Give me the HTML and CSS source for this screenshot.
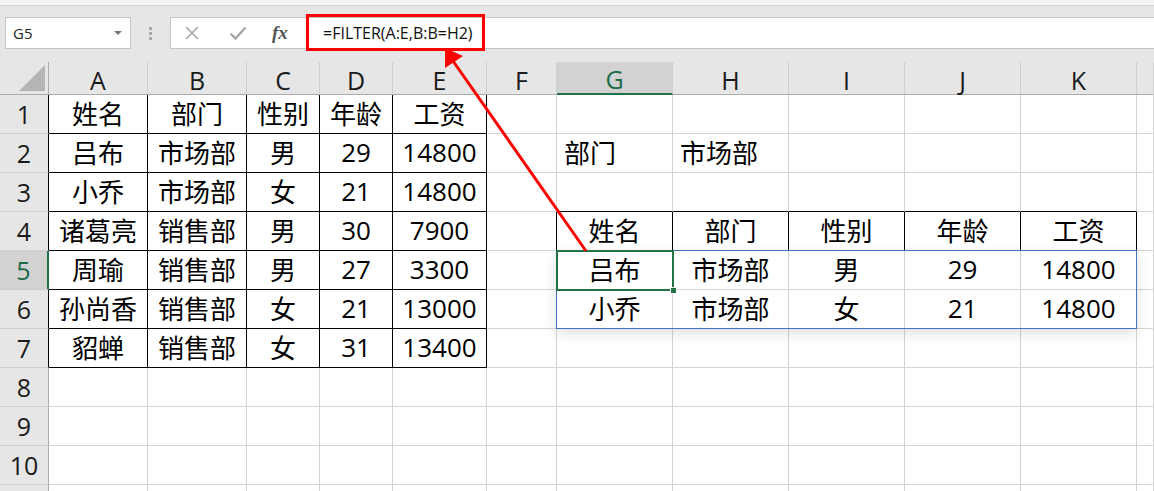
FILE: index.html
```html
<!DOCTYPE html>
<html lang="zh-CN">
<head>
    <meta charset="UTF-8">
    <title>FILTER</title>
    <link rel="stylesheet" href="styles.css">
</head>
<body>
<div class="app">
    <div class="ribbon-edge"></div>

    <!-- name box + formula bar -->
    <div class="formula-row">
        <div class="namebox">
            <span>G5</span>
            <span class="caret"></span>
        </div>
        <div class="grip"><i></i><i></i><i></i></div>
        <div class="fbox">
            <div class="fbtns">
                <svg width="16" height="16" viewBox="0 0 16 16"><path d="M2 2 L14 14 M14 2 L2 14" stroke="#a6a6a6" stroke-width="1.6" fill="none"/></svg>
                <svg width="18" height="16" viewBox="0 0 18 16"><path d="M1.5 8.5 L6.5 13.5 L16.5 2.5" stroke="#a6a6a6" stroke-width="2.4" fill="none"/></svg>
                <span class="fx">fx</span>
            </div>
            <div class="ftext">=FILTER(A:E,B:B=H2)</div>
        </div>
    </div>

    <!-- worksheet -->
    <div class="sheet">
        <div class="corner"><span class="tri"></span></div>
        <div class="ch">A</div>
        <div class="ch">B</div>
        <div class="ch">C</div>
        <div class="ch">D</div>
        <div class="ch">E</div>
        <div class="ch">F</div>
        <div class="ch sel">G</div>
        <div class="ch">H</div>
        <div class="ch">I</div>
        <div class="ch">J</div>
        <div class="ch">K</div>
        <div class="ch"></div>

        <div class="rh edge">1</div>
        <div class="c t">姓名</div>
        <div class="c t">部门</div>
        <div class="c t">性别</div>
        <div class="c t">年龄</div>
        <div class="c t">工资</div>
        <div class="c"></div>
        <div class="c"></div>
        <div class="c"></div>
        <div class="c"></div>
        <div class="c"></div>
        <div class="c"></div>
        <div class="c"></div>

        <div class="rh edge">2</div>
        <div class="c t">吕布</div>
        <div class="c t">市场部</div>
        <div class="c t">男</div>
        <div class="c t">29</div>
        <div class="c t">14800</div>
        <div class="c"></div>
        <div class="c left">部门</div>
        <div class="c left">市场部</div>
        <div class="c"></div>
        <div class="c"></div>
        <div class="c"></div>
        <div class="c"></div>

        <div class="rh edge">3</div>
        <div class="c t">小乔</div>
        <div class="c t">市场部</div>
        <div class="c t">女</div>
        <div class="c t">21</div>
        <div class="c t">14800</div>
        <div class="c"></div>
        <div class="c bb"></div>
        <div class="c bb"></div>
        <div class="c bb"></div>
        <div class="c bb"></div>
        <div class="c bb"></div>
        <div class="c"></div>

        <div class="rh edge">4</div>
        <div class="c t">诸葛亮</div>
        <div class="c t">销售部</div>
        <div class="c t">男</div>
        <div class="c t">30</div>
        <div class="c t">7900</div>
        <div class="c br"></div>
        <div class="c t">姓名</div>
        <div class="c t">部门</div>
        <div class="c t">性别</div>
        <div class="c t">年龄</div>
        <div class="c t">工资</div>
        <div class="c"></div>

        <div class="rh sel">5</div>
        <div class="c t">周瑜</div>
        <div class="c t">销售部</div>
        <div class="c t">男</div>
        <div class="c t">27</div>
        <div class="c t">3300</div>
        <div class="c"></div>
        <div class="c">吕布</div>
        <div class="c">市场部</div>
        <div class="c">男</div>
        <div class="c">29</div>
        <div class="c">14800</div>
        <div class="c"></div>

        <div class="rh edge">6</div>
        <div class="c t">孙尚香</div>
        <div class="c t">销售部</div>
        <div class="c t">女</div>
        <div class="c t">21</div>
        <div class="c t">13000</div>
        <div class="c"></div>
        <div class="c">小乔</div>
        <div class="c">市场部</div>
        <div class="c">女</div>
        <div class="c">21</div>
        <div class="c">14800</div>
        <div class="c"></div>

        <div class="rh edge">7</div>
        <div class="c t">貂蝉</div>
        <div class="c t">销售部</div>
        <div class="c t">女</div>
        <div class="c t">31</div>
        <div class="c t">13400</div>
        <div class="c"></div>
        <div class="c"></div>
        <div class="c"></div>
        <div class="c"></div>
        <div class="c"></div>
        <div class="c"></div>
        <div class="c"></div>

        <div class="rh">8</div>
        <div class="c"></div>
        <div class="c"></div>
        <div class="c"></div>
        <div class="c"></div>
        <div class="c"></div>
        <div class="c"></div>
        <div class="c"></div>
        <div class="c"></div>
        <div class="c"></div>
        <div class="c"></div>
        <div class="c"></div>
        <div class="c"></div>

        <div class="rh">9</div>
        <div class="c"></div>
        <div class="c"></div>
        <div class="c"></div>
        <div class="c"></div>
        <div class="c"></div>
        <div class="c"></div>
        <div class="c"></div>
        <div class="c"></div>
        <div class="c"></div>
        <div class="c"></div>
        <div class="c"></div>
        <div class="c"></div>

        <div class="rh">10</div>
        <div class="c"></div>
        <div class="c"></div>
        <div class="c"></div>
        <div class="c"></div>
        <div class="c"></div>
        <div class="c"></div>
        <div class="c"></div>
        <div class="c"></div>
        <div class="c"></div>
        <div class="c"></div>
        <div class="c"></div>
        <div class="c"></div>

        <!-- row 11 only peeks in at the bottom edge -->
        <div class="rh"></div>
        <div class="c"></div>
        <div class="c"></div>
        <div class="c"></div>
        <div class="c"></div>
        <div class="c"></div>
        <div class="c"></div>
        <div class="c"></div>
        <div class="c"></div>
        <div class="c"></div>
        <div class="c"></div>
        <div class="c"></div>
        <div class="c"></div>

        <!-- spill range + active cell -->
        <div class="spill"></div>
        <div class="active"><span class="handle"></span></div>
    </div>

    <!-- annotation -->
    <div class="callout"></div>
    <svg class="arrow" width="1154" height="491" viewBox="0 0 1154 491">
        <line x1="586" y1="251" x2="453" y2="61" stroke="#ff0000" stroke-width="3"/>
        <polygon points="445,48 445,68 463,56" fill="#ff0000"/>
    </svg>
</div>
</body>
</html>
```

FILE: styles.css
```css
* {
    box-sizing: border-box;
}
body {
    margin: 0;
    overflow: hidden;
    background: #fff;
    font-family: "Open Sans", "Noto Sans CJK SC", sans-serif;
    color: #000;
}
.app {
    position: relative;
    width: 1154px;
    height: 491px;
    overflow: hidden;
}

/* top strip */
.ribbon-edge {
    height: 6px;
    background: #f3f3f3;
    border-bottom: 1px solid #d6d6d6;
}
.formula-row {
    height: 56px;
    background: #e6e6e6;
    display: flex;
    align-items: flex-start;
    padding: 11px 0 0 5px;
}
.namebox {
    width: 126px;
    height: 32px;
    background: #fff;
    border: 1px solid #c6c6c6;
    display: flex;
    align-items: center;
    justify-content: space-between;
    padding: 0 8px 0 7px;
    font-size: 15px;
    color: #222;
}
.caret {
    width: 0;
    height: 0;
    border-left: 4px solid transparent;
    border-right: 4px solid transparent;
    border-top: 4px solid #777;
}
.grip {
    width: 39px;
    height: 32px;
    display: flex;
    flex-direction: column;
    align-items: center;
    justify-content: center;
    gap: 2px;
}
.grip i {
    display: block;
    width: 3px;
    height: 3px;
    background: #a8a8a8;
}
.fbox {
    flex: 1;
    height: 32px;
    background: #fff;
    border: 1px solid #c6c6c6;
    border-right: none;
    display: flex;
    align-items: center;
}
.fbtns {
    width: 135px;
    display: flex;
    align-items: center;
    gap: 29px;
    padding-left: 13px;
}
.fx {
    font-family: "Liberation Serif", serif;
    font-style: italic;
    font-weight: bold;
    font-size: 19px;
    color: #555;
    margin-left: -4px;
}
.ftext {
    padding-left: 17px;
    font-size: 16px;
    color: #111;
}

/* worksheet grid */
.sheet {
    position: relative;
    display: grid;
    grid-template-columns: 49px 99px 99px 73px 73px 94px 70px 116px 116px 116px 116px 116px 1fr;
    grid-template-rows: 33px;
    grid-auto-rows: 39px;
    font-size: 26px;
}
.corner {
    position: relative;
    background: #e6e6e6;
    border-right: 1px solid #ababab;
    border-bottom: 1px solid #ababab;
}
.tri {
    position: absolute;
    right: 3px;
    bottom: 3px;
    width: 0;
    height: 0;
    border-left: 26px solid transparent;
    border-bottom: 26px solid #b5b5b5;
}
.ch {
    background: #e6e6e6;
    border-right: 1px solid #cfcfcf;
    border-bottom: 1px solid #ababab;
    display: flex;
    align-items: center;
    justify-content: center;
    padding-top: 3px;
    font-size: 25px;
    color: #1a1a1a;
}
.ch.sel {
    background: #d2d2d2;
    border-bottom: 2px solid #217346;
    color: #1e6b4a;
}
.rh {
    background: #e6e6e6;
    border-right: 1px solid #ababab;
    border-bottom: 1px solid #cfcfcf;
    display: flex;
    align-items: center;
    justify-content: center;
    font-size: 25px;
    color: #1a1a1a;
}
.rh.edge {
    border-right-color: #000;
}
.rh.sel {
    background: #d2d2d2;
    border-right: 2px solid #217346;
    color: #1e6b4a;
}
.c {
    border-right: 1px solid #d4d4d4;
    border-bottom: 1px solid #d4d4d4;
    display: flex;
    align-items: center;
    justify-content: center;
    white-space: nowrap;
    padding-bottom: 2px;
}
.c.t {
    border-right-color: #000;
    border-bottom-color: #000;
}
.c.bb {
    border-bottom-color: #000;
}
.c.br {
    border-right-color: #000;
}
.c.left {
    justify-content: flex-start;
    padding-left: 7px;
}

/* spill outline and selected cell */
.spill {
    position: absolute;
    left: 556px;
    top: 188px;
    width: 581px;
    height: 79px;
    border: 1px solid #4472c4;
    box-shadow: 0 5px 12px rgba(0, 0, 0, 0.12);
    pointer-events: none;
}
.active {
    position: absolute;
    left: 556px;
    top: 188px;
    width: 118px;
    height: 41px;
    border: 2px solid #217346;
}
.handle {
    position: absolute;
    right: -5px;
    bottom: -5px;
    width: 7px;
    height: 7px;
    background: #217346;
    border: 1px solid #fff;
}

/* red annotation */
.callout {
    position: absolute;
    left: 306px;
    top: 14px;
    width: 179px;
    height: 37px;
    border: 3px solid #ff0000;
}
.arrow {
    position: absolute;
    left: 0;
    top: 0;
}
```
